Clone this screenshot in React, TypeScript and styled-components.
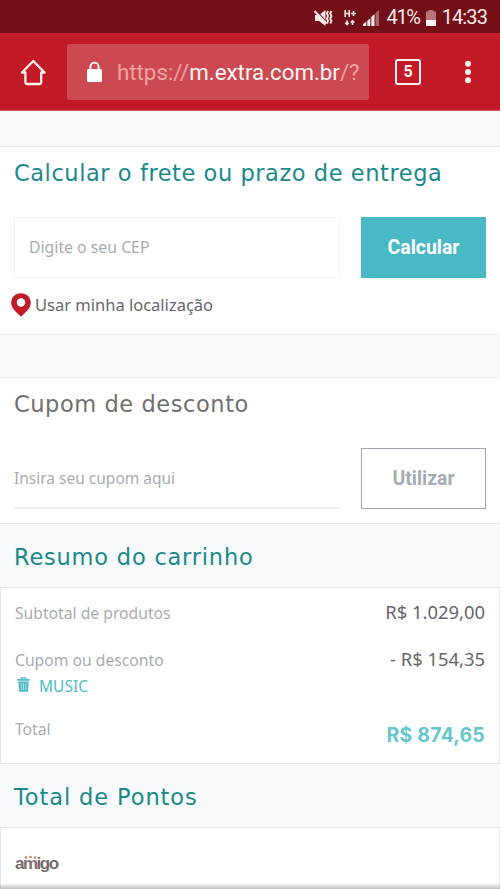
import React from 'react';
import styled, { createGlobalStyle } from 'styled-components';

const GlobalStyle = createGlobalStyle`
  *, *::before, *::after { box-sizing: border-box; }
  body { margin: 0; background: #fff; }
`;

const Screen = styled.div`
  position: relative;
  width: 500px;
  height: 889px;
  overflow: hidden;
  display: flex;
  flex-direction: column;
  background: #f8f9fb;
  font-family: 'Noto Sans', 'Open Sans', sans-serif;
  color: #66666a;
`;

const StatusBar = styled.header`
  flex: none;
  height: 33px;
  padding: 2px 13px 0 0;
  display: flex;
  align-items: center;
  justify-content: flex-end;
  background: #730f16;
  color: #f8e9e8;
  font: 20px/31px Roboto, sans-serif;
  svg { flex: none; display: block; }
`;

const StatusText = styled.span<{ $tracking: number; $before: number }>`
  letter-spacing: ${p => p.$tracking}px;
  margin-left: ${p => p.$before}px;
  white-space: nowrap;
`;

const Network = styled.svg`
  margin-left: 11px;
`;
const Signal = styled.svg`
  margin-left: 7px;
`;
const Battery = styled.svg`
  margin-left: 6px;
`;

const BrowserBar = styled.nav`
  flex: none;
  height: 78px;
  display: grid;
  grid-template-columns: 67px 302px 77px 44px;
  align-items: center;
  background: #c21a26;
  border-bottom: 1px solid #cf5c63;
  svg { display: block; }
`;

const HomeSlot = styled.div`
  padding: 1px 0 0 20px;
`;

const AddressField = styled.div`
  height: 56px;
  padding-left: 19px;
  display: flex;
  align-items: center;
  gap: 14px;
  border-radius: 2px;
  background: #cd4952;
`;

const Url = styled.span`
  font: 22.3px/56px Roboto, sans-serif;
  color: #f0a3a1;
  white-space: nowrap;
  strong { font-weight: 400; color: #fff7f4; }
`;

const TabCount = styled.div`
  width: 26px;
  height: 26px;
  margin: 1px 0 0 26px;
  display: flex;
  align-items: center;
  justify-content: center;
  border: 2.5px solid #fff0ee;
  border-radius: 3px;
  color: #fff0ee;
  font: 700 16px/22px Roboto, sans-serif;
`;

const MenuSlot = styled.div`
  padding: 1px 0 0 18px;
`;

const Section = styled.section<{ $gap: number; $height: number }>`
  flex: none;
  margin-top: ${p => p.$gap}px;
  height: ${p => p.$height}px;
  padding: 0 14px;
  background: #fff;
  border-top: 1px solid #e6eaec;
  border-bottom: 1px solid #e6e9ee;
`;

const Heading = styled.h2<{ $muted?: boolean; $spacing: number }>`
  margin: 0;
  font: 400 22.5px/30px 'DejaVu Sans', sans-serif;
  letter-spacing: ${p => p.$spacing}px;
  color: ${p => (p.$muted ? '#6f6f70' : '#19898a')};
  white-space: nowrap;
`;

const SectionTitle = styled.div<{ $height: number }>`
  height: ${p => p.$height}px;
  padding-top: 11px;
`;

const FormRow = styled.div`
  display: grid;
  grid-template-columns: 326px 125px;
  column-gap: 21px;
  height: 61px;
`;

const Field = styled.input<{ $underlined?: boolean }>`
  width: 100%;
  height: 61px;
  padding: 0 ${p => (p.$underlined ? 0 : 14)}px ${p => (p.$underlined ? 0 : 1)}px;
  border: 1px solid #f1f2f4;
  border-width: ${p => (p.$underlined ? '0 0 2px' : '1px')};
  border-color: ${p => (p.$underlined ? '#eeeff1' : '#f2f3f5')};
  border-radius: 0;
  outline: 0;
  background: transparent;
  font: ${p => (p.$underlined ? 15.5 : 15.8)}px 'Noto Sans', sans-serif;
  &::placeholder { color: #a7abb2; opacity: 1; }
`;

const Button = styled.button<{ $outlined?: boolean }>`
  height: 61px;
  padding: 0 0 1px;
  border: ${p => (p.$outlined ? '1px solid #a0a8ad' : '0')};
  border-radius: 0;
  background: ${p => (p.$outlined ? '#fff' : '#48b9c5')};
  color: ${p => (p.$outlined ? '#a5abb0' : '#fff')};
  font: 700 19.4px Roboto, sans-serif;
`;

const LocationLink = styled.div`
  display: flex;
  align-items: center;
  gap: 4px;
  height: 24px;
  margin: 15px 0 0 -3px;
  font-size: 16.5px;
  line-height: 24px;
  svg { flex: none; }
`;

const BandTitle = styled.div<{ $height: number; $top: number }>`
  flex: none;
  height: ${p => p.$height}px;
  padding: ${p => p.$top}px 14px 0;
`;

const Card = styled.section<{ $height: number }>`
  flex: none;
  height: ${p => p.$height}px;
  padding: 12px 14px 0;
  background: #fff;
  border: 1px solid #e4e8ed;
`;

const SummaryRow = styled.div<{ $height: number; $gap?: number }>`
  display: flex;
  justify-content: space-between;
  height: ${p => p.$height}px;
  margin-top: ${p => p.$gap ?? 0}px;
`;

const Label = styled.span`
  font-size: 15.7px;
  line-height: 26px;
  color: #a7abb2;
`;

const Amount = styled.span`
  font-size: 18.4px;
  line-height: 24px;
`;

const GrandTotal = styled.strong`
  padding-top: 4px;
  font: 700 19.4px/30px Inter, sans-serif;
  letter-spacing: 0.25px;
  color: #65c6cb;
`;

const Coupon = styled.div`
  display: flex;
  align-items: center;
  gap: 9px;
  height: 26px;
  padding-left: 2px;
  color: #4fbcc3;
  font-size: 15.5px;
  line-height: 26px;
  svg { margin-top: -3px; }
`;

const AmigoLogo = styled.div`
  display: flex;
  width: 44px;
  margin-top: 12px;
  color: #716c6e;
  font: 700 17px/24px 'Liberation Sans', sans-serif;
  letter-spacing: -1.5px;
`;

const LogoM = styled.span`
  position: relative;
  color: #806e6d;
  svg { position: absolute; left: 0; top: 3px; }
`;

const BottomShade = styled.div`
  position: absolute;
  left: 0;
  right: 0;
  bottom: 0;
  height: 6px;
  background: linear-gradient(rgba(90, 90, 90, 0), rgba(90, 90, 90, 0.38));
`;

const MutedSpeaker = () => (
  <svg width="19" height="18" viewBox="0 0 19 18" fill="#f8e9e8">
    <path d="M1 6h4l6.500-5v16L5 12H1z" />
    <path d="M1 .5l12 13" stroke="#730f16" strokeWidth="1.500" />
    <path d="M.5 2l12 12.500" stroke="#f8e9e8" strokeWidth="2" />
    <path d="M14 2l-1 2.300L14 7l-1 2.700 1 2.300-1 2.500M17.500 2l-1.300 2.300L17.500 7l-1.300 2.700 1.300 2.300-1.300 2.500" fill="none" stroke="#f8e9e8" strokeWidth="1.900" />
  </svg>
);

const NetworkIcon = () => (
  <Network width="12" height="18" viewBox="0 0 12 18" fill="none" stroke="#f8e9e8" strokeWidth="1.600">
    <path d="M1.200 1v7M5.200 1v7M1 4.500h4.200M7 4.500h5M9.500 2v5" />
    <path d="M3 11.500v4M1.300 13.900L3 15.600l1.700-1.700M8.500 16v-4M6.800 13.600l1.700-1.700 1.700 1.700" />
  </Network>
);

const SignalIcon = () => (
  <Signal width="16" height="17" viewBox="0 0 16 17" fill="#f8e9e8">
    <path d="M0 15l3.300-2.500V17H0zM4.300 11.800l3-2.600V17h-3zM8.300 8l3.200-3v12H8.300z" />
    <path d="M12.500 4L16 1v16h-3.500z" opacity=".4" />
  </Signal>
);

const BatteryIcon = () => (
  <Battery width="10" height="16" viewBox="0 0 10 16">
    <path d="M2.500 0h5v1.500H10V10H0V1.500h2.500z" fill="#b77578" />
    <path d="M0 10h10v6H0z" fill="#fff5f3" />
  </Battery>
);

const HomeIcon = () => (
  <svg width="27" height="27" viewBox="0 0 27 27" fill="none" stroke="#fff0ee" strokeWidth="2.3" strokeLinejoin="round" strokeLinecap="round">
    <path d="M2 13.5L13.3 2l11.3 11.5h-3.4V23q0 2-2 2H7.4q-2 0-2-2v-9.500z" />
  </svg>
);

const LockIcon = () => (
  <svg width="17" height="22" viewBox="0 0 17 22">
    <path d="M4.4 9V5.7a4.1 4.1 0 0 1 8.200 0V9" fill="none" stroke="#fff" strokeWidth="1.9" />
    <rect x="1" y="8" width="15" height="13" rx="1.5" fill="#fff" />
  </svg>
);

const MoreIcon = () => (
  <svg width="8" height="24" viewBox="0 0 8 24" fill="#fff0ee">
    <circle cx="4" cy="3.800" r="3" />
    <circle cx="4" cy="12" r="3" />
    <circle cx="4" cy="20.200" r="3" />
  </svg>
);

const PinIcon = () => (
  <svg width="20" height="24" viewBox="0 0 20 24">
    <path d="M10 .3C4.400.3.2 4.400.2 9.700c0 5.800 5.300 9.500 9.800 14 4.500-4.500 9.800-8.200 9.800-14C19.800 4.400 15.600.3 10 .3z" fill="#c11a28" />
    <circle cx="10" cy="9.500" r="4.200" fill="#fff" />
  </svg>
);

const TrashIcon = () => (
  <svg width="13" height="15" viewBox="0 0 13 15">
    <path d="M4.300 2V.8h4.400V2" fill="none" stroke="#4fbcc3" strokeWidth="1.200" />
    <path d="M.3 2h12.400v1.800H.3zM1.300 4.500h10.400l-.8 10.200H2.100z" fill="#4fbcc3" />
    <path d="M4.100 6l.4 7M6.500 6v7M8.900 6l-.4 7" stroke="#c5eaec" strokeWidth=".7" />
  </svg>
);

export default function App() {
  return (
    <>
      <GlobalStyle />
      <Screen>
        <StatusBar>
          <MutedSpeaker />
          <NetworkIcon />
          <SignalIcon />
          <StatusText $tracking={-1.3} $before={7}>41%</StatusText>
          <BatteryIcon />
          <StatusText $tracking={-0.9} $before={6}>14:33</StatusText>
        </StatusBar>
        <BrowserBar>
          <HomeSlot><HomeIcon /></HomeSlot>
          <AddressField>
            <LockIcon />
            <Url>https://<strong>m.extra.com.br</strong>/?</Url>
          </AddressField>
          <TabCount>5</TabCount>
          <MenuSlot><MoreIcon /></MenuSlot>
        </BrowserBar>

        <Section $gap={35} $height={189}>
          <SectionTitle $height={70}>
            <Heading $spacing={0.56}>Calcular o frete ou prazo de entrega</Heading>
          </SectionTitle>
          <FormRow>
            <Field placeholder="Digite o seu CEP" />
            <Button>Calcular</Button>
          </FormRow>
          <LocationLink><PinIcon />Usar minha localização</LocationLink>
        </Section>

        <Section $gap={42} $height={147}>
          <SectionTitle $height={70}>
            <Heading $muted $spacing={0.57}>Cupom de desconto</Heading>
          </SectionTitle>
          <FormRow>
            <Field $underlined placeholder="Insira seu cupom aqui" />
            <Button $outlined>Utilizar</Button>
          </FormRow>
        </Section>

        <BandTitle $height={63} $top={18}>
          <Heading $spacing={0.79}>Resumo do carrinho</Heading>
        </BandTitle>
        <Card $height={177}>
          <SummaryRow $height={47}>
            <Label>Subtotal de produtos</Label>
            <Amount>R$ 1.029,00</Amount>
          </SummaryRow>
          <SummaryRow $height={26}>
            <Label>Cupom ou desconto</Label>
            <Amount>- R$ 154,35</Amount>
          </SummaryRow>
          <Coupon><TrashIcon />MUSIC</Coupon>
          <SummaryRow $height={48} $gap={17}>
            <Label>Total</Label>
            <GrandTotal>R$ 874,65</GrandTotal>
          </SummaryRow>
        </Card>

        <BandTitle $height={63} $top={18}>
          <Heading $spacing={0.9}>Total de Pontos</Heading>
        </BandTitle>
        <Card $height={80}>
          <AmigoLogo>
            a
            <LogoM>
              m
              <svg width="15" height="5" viewBox="0 0 15 5" fill="#c98172">
                <circle cx="3" cy="2.500" r="1.300" /><circle cx="7.500" cy="2" r="1.300" /><circle cx="12" cy="2.500" r="1.300" />
              </svg>
            </LogoM>
            igo
          </AmigoLogo>
        </Card>
        <BottomShade />
      </Screen>
    </>
  );
}
